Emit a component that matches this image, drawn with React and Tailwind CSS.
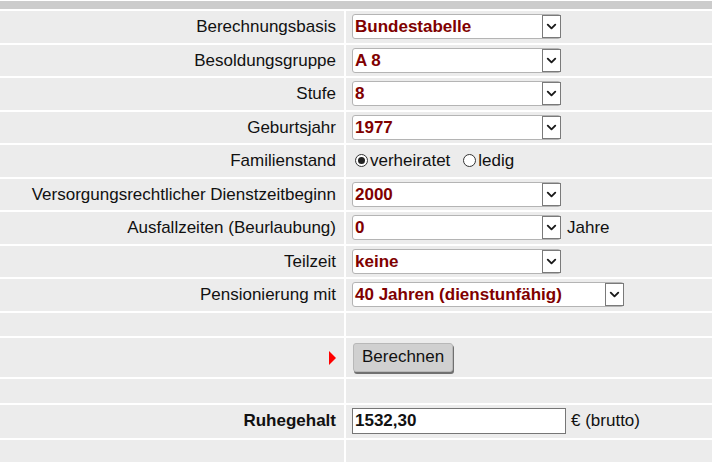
import { ChevronDown } from 'lucide-react';

const Select = ({ value, width = 'w-[209px]' }) => (
  <div className={`${width} h-[25px] bg-white border border-[#b4b4b4] rounded-[3px] flex items-center`}>
    <span className="flex-1 pl-[2px] text-[17px] font-bold text-[#800000] leading-none">{value}</span>
    <span className="w-[19px] h-[23px] border border-[#7a7a7a] bg-white flex items-center justify-center -mr-px">
      <ChevronDown size={15} strokeWidth={3} className="text-[#1a1a1a]" />
    </span>
  </div>
);

const Radio = ({ checked }) => (
  <span className="w-[13px] h-[13px] rounded-full border border-[#333] bg-white flex items-center justify-center">
    {checked && <span className="w-[7px] h-[7px] rounded-full bg-[#222]" />}
  </span>
);

const Row = ({ label, children, h = 'h-[31.5px]', bold }) => (
  <tr className={h}>
    <td className={`bg-[#ececec] text-right pr-[8px] w-[344px] ${bold ? 'font-bold' : ''}`}>{label}</td>
    <td className="bg-[#ececec] pl-[6px]">{children}</td>
  </tr>
);

export default function App() {
  return (
    <div className="w-[712px] h-[476px] bg-white text-[17px] text-[#111] overflow-hidden" style={{ fontFamily: '"Liberation Sans", Arial, sans-serif' }}>
      <div className="h-[8px] mt-px bg-[#cccccc]" />
      <table className="border-separate border-spacing-[2px] -mx-[2px] w-[716px]">
        <tbody>
          <Row label="Berechnungsbasis"><Select value="Bundestabelle" /></Row>
          <Row label="Besoldungsgruppe"><Select value="A 8" /></Row>
          <Row label="Stufe"><Select value="8" /></Row>
          <Row label="Geburtsjahr"><Select value="1977" /></Row>
          <Row label="Familienstand">
            <div className="flex items-center pl-[3px]">
              <Radio checked />
              <span className="ml-[2px]">verheiratet</span>
              <span className="ml-[13px]"><Radio /></span>
              <span className="ml-[2px]">ledig</span>
            </div>
          </Row>
          <Row label="Versorgungsrechtlicher Dienstzeitbeginn"><Select value="2000" /></Row>
          <Row label="Ausfallzeiten (Beurlaubung)">
            <div className="flex items-center gap-[6px]">
              <Select value="0" />
              <span>Jahre</span>
            </div>
          </Row>
          <Row label="Teilzeit"><Select value="keine" /></Row>
          <Row label="Pensionierung mit"><Select value="40 Jahren (dienstunfähig)" width="w-[272px]" /></Row>
          <Row label="" h="h-[23px]" />
          <tr className="h-[39px]">
            <td className="bg-[#ececec] text-right pr-[8px]">
              <span className="inline-block w-0 h-0 border-y-[7px] border-y-transparent border-l-[7px] border-l-[#ff0000] align-middle" />
            </td>
            <td className="bg-[#ececec] pl-[7px]">
              <button className="h-[29px] px-[8px] bg-[#d0d0d0] border border-[#b8b8b8] rounded-[3px] shadow-[1px_2px_0_#707070] text-[17px] text-[#111]">
                Berechnen
              </button>
            </td>
          </tr>
          <Row label="" h="h-[24px]" />
          <Row label="Ruhegehalt" h="h-[33px]" bold>
            <div className="flex items-center gap-[5px]">
              <div className="w-[214px] h-[26px] border border-[#767676] bg-white flex items-center pl-[2px] font-bold">1532,30</div>
              <span>€ (brutto)</span>
            </div>
          </Row>
          <Row label="" h="h-[22px]" />
        </tbody>
      </table>
    </div>
  );
}
